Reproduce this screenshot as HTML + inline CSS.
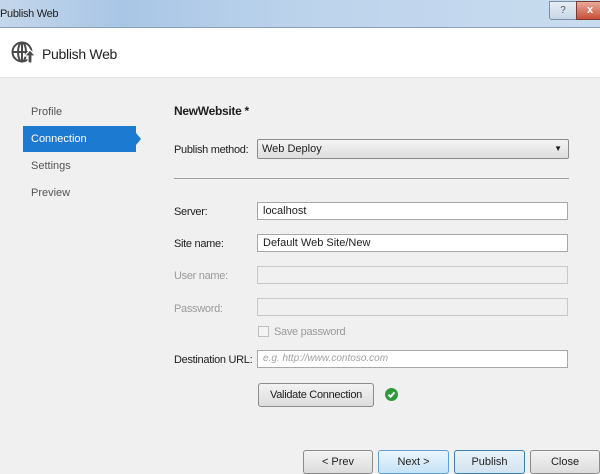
<!DOCTYPE html>
<html><head><style>
body{margin:0;width:600px;height:474px;background:#f0f0f0;font-family:"Liberation Sans",sans-serif;font-size:11px;color:#1e1e1e;position:relative;overflow:hidden}
.a{position:absolute}
.tb{left:0;top:0;width:600px;height:27px;background:linear-gradient(90deg,#c4d6ea,#a9c6e6 20%,#bcd3ec 50%,#c9dcef);border-bottom:1px solid #8aa0b8}
.hdr{left:0;top:28px;width:600px;height:49px;background:#fff;border-bottom:1px solid #e6e6e6}
.inp{background:#fff;border:1px solid #a8a8a8;box-sizing:border-box;height:18px;padding-left:5px;line-height:16px}
.dis{background:#f0f0f0;border:1px solid #c8c8c8}
.lbl{font-size:11px;letter-spacing:-0.3px}
.btn{border:1px solid #8c8c8c;border-radius:3px;background:linear-gradient(#f3f3f3,#dcdcdc);text-align:center;box-sizing:border-box;height:24px;line-height:22px}
.nav{left:31px;font-size:11px;color:#555}
</style></head><body>
<div class="a tb"></div>
<div class="a" style="left:0;top:8px;font-size:11px;letter-spacing:-0.3px">Publish Web</div>
<div class="a" style="left:549px;top:1px;width:26px;height:17px;border:1px solid #7a8ea6;border-radius:0 0 0 3px;background:linear-gradient(#e6eef7,#c8d6e6);text-align:center;font-size:10px;color:#555;line-height:17px">?</div>
<div class="a" style="left:576px;top:1px;width:26px;height:17px;border:1px solid #7a3a30;background:linear-gradient(#e9a99a,#c7503a);text-align:center;font-size:11px;color:#fff;font-weight:bold;line-height:17px">x</div>
<div class="a hdr"></div>
<svg class="a" style="left:11px;top:40px" width="26" height="26" viewBox="0 0 26 26"><g fill="none" stroke="#4a4a4a" stroke-width="2"><circle cx="11" cy="12" r="9.5"/><ellipse cx="11" cy="12" rx="4" ry="9.5"/><line x1="1.5" y1="12" x2="20.5" y2="12"/><line x1="11" y1="2.5" x2="11" y2="21.5"/></g><path d="M17 23v-7h-3.5l5.5-6 5.5 6H21v7z" fill="#4a4a4a" stroke="#fff" stroke-width="1.2"/></svg>
<div class="a" style="left:42px;top:46px;font-size:14px;color:#222;letter-spacing:-0.3px">Publish Web</div>
<div class="a nav" style="top:106px">Profile</div>
<div class="a" style="left:23px;top:126px;width:113px;height:26px;background:#1c7bd0"></div>
<div class="a" style="left:136px;top:133px;width:0;height:0;border-left:5px solid #1c7bd0;border-top:6px solid transparent;border-bottom:6px solid transparent"></div>
<div class="a" style="left:31px;top:133px;color:#fff;font-size:11px">Connection</div>
<div class="a nav" style="top:160px">Settings</div>
<div class="a nav" style="top:187px">Preview</div>
<div class="a" style="left:174px;top:104px;font-weight:bold;font-size:12px;letter-spacing:-0.3px">NewWebsite *</div>
<div class="a lbl" style="left:174px;top:144px">Publish method:</div>
<div class="a" style="left:257px;top:139px;width:312px;height:20px;box-sizing:border-box;border:1px solid #8c8c8c;border-radius:2px;background:linear-gradient(#f4f4f4,#dedede);padding-left:4px;line-height:18px">Web Deploy<span style="position:absolute;right:6px;top:0;font-size:8px">▼</span></div>
<div class="a" style="left:174px;top:178px;width:395px;height:1px;background:#a0a0a0"></div>
<div class="a lbl" style="left:174px;top:206px">Server:</div>
<div class="a inp" style="left:257px;top:202px;width:311px">localhost</div>
<div class="a lbl" style="left:174px;top:238px">Site name:</div>
<div class="a inp" style="left:257px;top:234px;width:311px">Default Web Site/New</div>
<div class="a lbl" style="left:174px;top:270px;color:#9a9a9a">User name:</div>
<div class="a inp dis" style="left:257px;top:266px;width:311px"></div>
<div class="a lbl" style="left:174px;top:303px;color:#9a9a9a">Password:</div>
<div class="a inp dis" style="left:257px;top:298px;width:311px"></div>
<div class="a" style="left:258px;top:326px;width:11px;height:11px;border:1px solid #c0c0c0;background:#f4f4f4;box-sizing:border-box"></div>
<div class="a lbl" style="left:274px;top:326px;color:#9a9a9a">Save password</div>
<div class="a lbl" style="left:174px;top:354px">Destination URL:</div>
<div class="a inp" style="left:257px;top:350px;width:311px;color:#a0a0a0;font-style:italic;font-size:10px">e.g. http://www.contoso.com</div>
<div class="a btn lbl" style="left:258px;top:383px;width:116px">Validate Connection</div>
<svg class="a" style="left:385px;top:388px" width="13" height="13"><circle cx="6.5" cy="6.5" r="6.5" fill="#2e9a3a"/><path d="M3.5 6.8l2 2 4-4.5" stroke="#fff" stroke-width="2" fill="none"/></svg>
<div class="a btn" style="left:303px;top:450px;width:70px">&lt; Prev</div>
<div class="a btn" style="left:378px;top:450px;width:71px;border-color:#5d9fd6;background:linear-gradient(#eaf5fd,#c6e3f7)">Next &gt;</div>
<div class="a btn" style="left:454px;top:450px;width:71px;border-color:#3c7fb1;background:linear-gradient(#e9f2f9,#d2e3f0)">Publish</div>
<div class="a btn" style="left:530px;top:450px;width:70px">Close</div>
</body></html>
